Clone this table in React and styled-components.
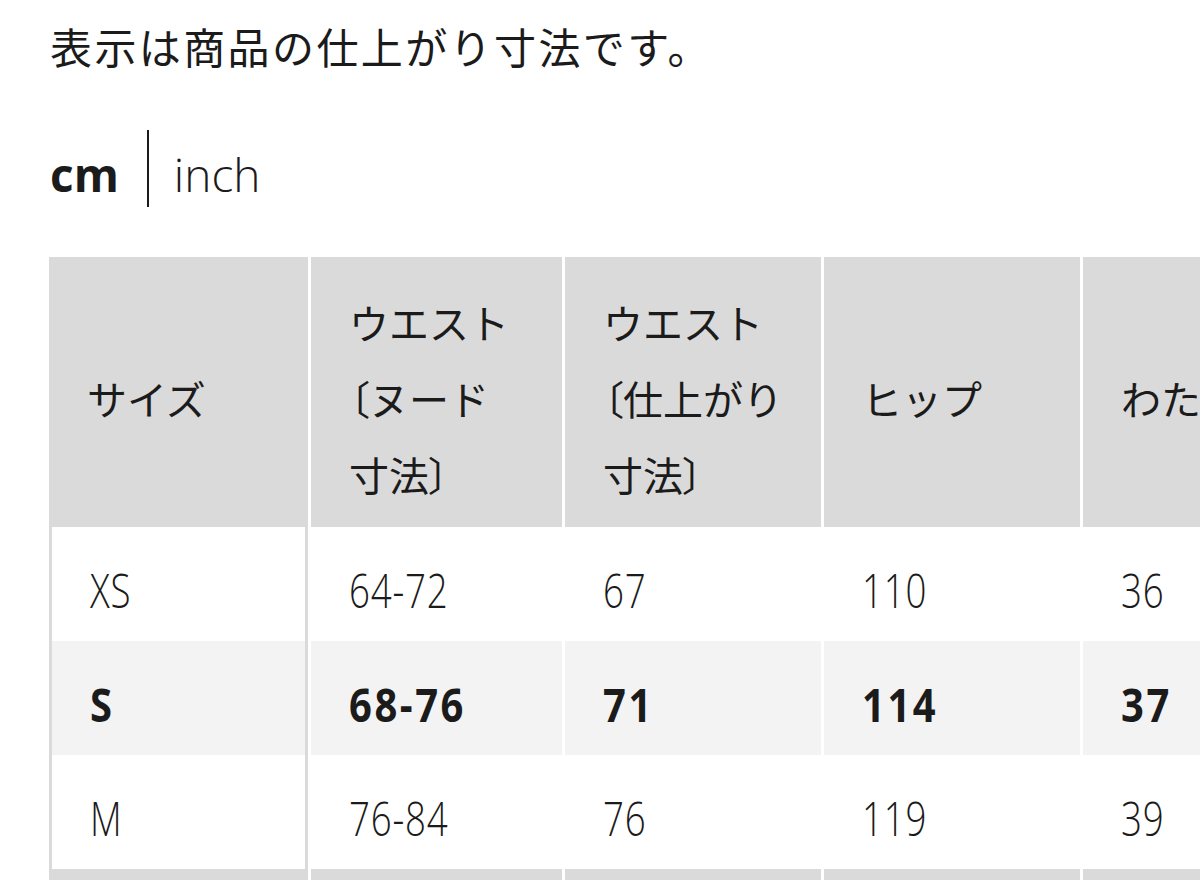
import React from "react";
import styled, { createGlobalStyle, css } from "styled-components";

const GlobalStyle = createGlobalStyle`
  html, body {
    margin: 0;
    padding: 0;
    background: #fff;
    overflow: hidden;
  }
  body {
    color: #1b1b1b;
    font-family: "Noto Sans CJK JP", "Noto Sans", sans-serif;
  }
`;

const JP = `"Noto Sans CJK JP", "Noto Sans", sans-serif`;
const NUM = `"Open Sans", "Liberation Sans", sans-serif`;

const Page = styled.div`
  height: 880px;
  overflow: hidden;
  padding: 25px 0 0 49px;
  box-sizing: border-box;
`;

const Note = styled.p`
  margin: 0 0 0 1px;
  font-family: ${JP};
  font-size: 42px;
  line-height: 42px;
  letter-spacing: 2.4px;
`;

const UnitSwitch = styled.div`
  display: flex;
  align-items: center;
  height: 77px;
  margin: 63px 0 0 1px;
`;

const Unit = styled.span`
  font-family: "Open Sans", "Inter", sans-serif;
  font-size: 46px;
  line-height: 1;
  font-weight: ${(p) => (p.$active ? 700 : 300)};
  padding-top: 10px;
`;

const Divider = styled.span`
  width: 2px;
  height: 77px;
  background: #1b1b1b;
  margin: 0 25px 0 28px;
`;

const TableWrap = styled.div`
  margin-top: 50px;
  width: 1300px;
`;

const Grid = styled.div`
  display: grid;
  grid-template-columns: 259px 251px 256px 256px 256px;
  grid-template-rows: 270px repeat(3, 114px) 40px;
  column-gap: 3px;
`;

const Cell = styled.div`
  display: flex;
  flex-direction: column;
  justify-content: center;
  align-items: flex-start;
  box-sizing: border-box;
  padding: 12px 0 0 38px;
  background: ${(p) => p.$bg || "#fff"};
  ${(p) =>
    p.$first &&
    css`
      border-left: 3px solid #dadada;
      border-right: 3px solid #dadada;
    `}
`;

const HeadText = styled.span`
  font-family: ${JP};
  font-size: 40px;
  line-height: 76px;
  white-space: nowrap;
`;

const Bracket = styled.span`
  font-feature-settings: "palt";
`;

const Value = styled.span`
  display: inline-block;
  font-family: ${NUM};
  font-size: 47px;
  line-height: 1;
  font-weight: ${(p) => (p.$bold ? 700 : 300)};
  letter-spacing: ${(p) => (p.$bold ? "3px" : "1px")};
  transform: scaleX(${(p) => (p.$bold ? 0.85 : 0.78)});
  transform-origin: left center;
`;

const HeadLine = ({ text }) => {
  const open = text.startsWith("〔");
  const close = text.endsWith("〕");
  const core = text.replace("〔", "").replace("〕", "");
  return (
    <HeadText>
      {open && <Bracket>〔</Bracket>}
      {core}
      {close && <Bracket>〕</Bracket>}
    </HeadText>
  );
};

const headers = [
  ["サイズ"],
  ["ウエスト", "〔ヌード", "寸法〕"],
  ["ウエスト", "〔仕上がり", "寸法〕"],
  ["ヒップ"],
  ["わたり幅"],
];

const rows = [
  { size: "XS", values: ["64-72", "67", "110", "36"] },
  { size: "S", values: ["68-76", "71", "114", "37"], selected: true },
  { size: "M", values: ["76-84", "76", "119", "39"] },
];

const SizeTable = () => (
  <TableWrap>
    <Grid>
      {headers.map((lines, i) => (
        <Cell key={`h${i}`} $bg="#dadada">
          {lines.map((line) => (
            <HeadLine key={line} text={line} />
          ))}
        </Cell>
      ))}
      {rows.map((row) => {
        const bg = row.selected ? "#f3f3f3" : "#fff";
        return (
          <React.Fragment key={row.size}>
            <Cell $first $bg={bg}>
              <Value $bold={row.selected}>{row.size}</Value>
            </Cell>
            {row.values.map((v, i) => (
              <Cell key={i} $bg={bg}>
                <Value $bold={row.selected}>{v}</Value>
              </Cell>
            ))}
          </React.Fragment>
        );
      })}
      {headers.map((_, i) => (
        <Cell key={`f${i}`} $bg="#dadada" />
      ))}
    </Grid>
  </TableWrap>
);

const App = () => (
  <Page>
    <GlobalStyle />
    <Note>表示は商品の仕上がり寸法です。</Note>
    <UnitSwitch>
      <Unit $active>cm</Unit>
      <Divider />
      <Unit>inch</Unit>
    </UnitSwitch>
    <SizeTable />
  </Page>
);

export default App;
